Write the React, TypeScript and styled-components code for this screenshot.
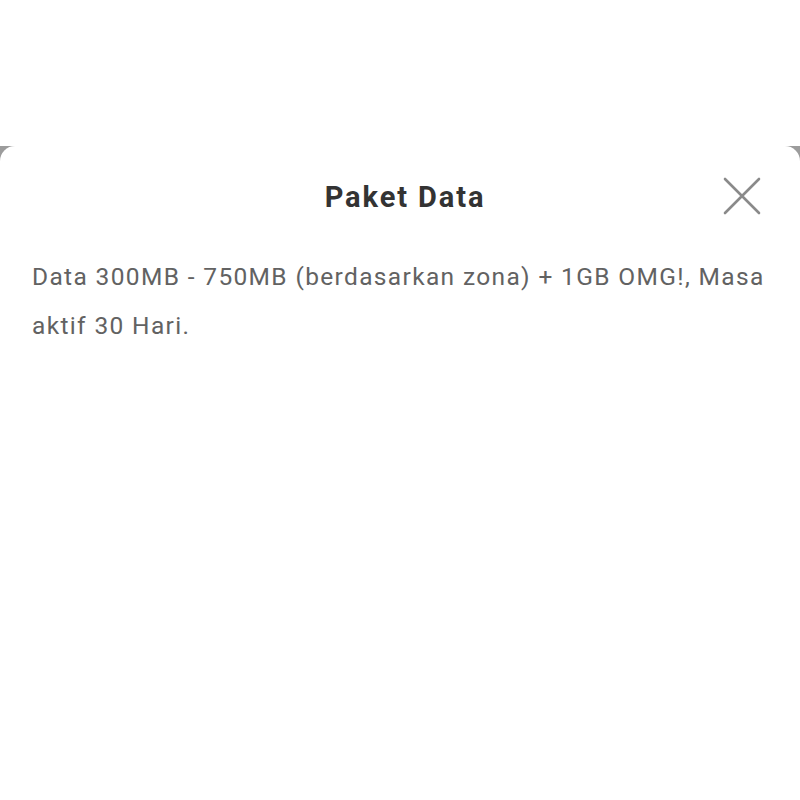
import React from "react";
import styled, { createGlobalStyle } from "styled-components";

const Global = createGlobalStyle`
  html, body { margin: 0; padding: 0; background: #ffffff; }
  body { font-family: Roboto, "Noto Sans", sans-serif; }
`;

const Page = styled.div`
  width: 800px;
  height: 800px;
  display: flex;
  flex-direction: column;
  background: #ffffff;
  overflow: hidden;
`;

const TopSpace = styled.div`
  height: 146px;
  flex: none;
  background: #ffffff;
`;

const Backdrop = styled.div`
  flex: 1;
  display: flex;
  flex-direction: column;
  background: #9c9c9c;
`;

const Sheet = styled.div`
  flex: 1;
  background: #ffffff;
  border-radius: 15px 15px 0 0;
  display: flex;
  flex-direction: column;
`;

const Header = styled.div`
  position: relative;
  height: 107px;
  box-sizing: border-box;
  padding: 34px 0 0 10px;
  display: flex;
  align-items: flex-start;
  justify-content: center;
`;

const Title = styled.h1`
  margin: 0;
  font-family: Roboto, sans-serif;
  font-weight: 700;
  font-size: 29px;
  line-height: 34px;
  color: #333333;
  letter-spacing: 1.9px;
`;

const CloseButton = styled.button`
  position: absolute;
  right: 39px;
  top: 31px;
  width: 38px;
  height: 38px;
  border: none;
  background: transparent;
  padding: 0;
  cursor: pointer;
  display: flex;
  align-items: center;
  justify-content: center;
`;

const Body = styled.p`
  margin: 0;
  padding: 0 12px 0 32px;
  font-family: Roboto, sans-serif;
  font-size: 24.5px;
  line-height: 48.5px;
  letter-spacing: 1.35px;
  color: #626262;
`;

export default function App() {
  return (
    <Page>
      <Global />
      <TopSpace />
      <Backdrop>
        <Sheet>
          <Header>
            <Title>Paket Data</Title>
            <CloseButton aria-label="Tutup">
              <svg width="38" height="38" viewBox="0 0 38 38">
                <path d="M2 2 L36 36 M36 2 L2 36" stroke="#8a8a8a" strokeWidth="2.6" strokeLinecap="round" fill="none" />
              </svg>
            </CloseButton>
          </Header>
          <Body>
            Data 300MB - 750MB (berdasarkan zona) + 1GB OMG!, Masa aktif 30 Hari.
          </Body>
        </Sheet>
      </Backdrop>
    </Page>
  );
}
